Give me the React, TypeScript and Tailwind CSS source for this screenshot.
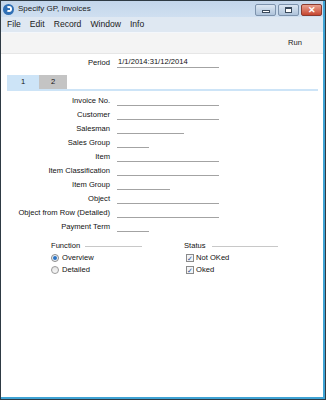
import React from "react";

const font = { fontFamily: '"Liberation Sans", Arial, sans-serif' };

function Row({ label, w }: { label: string; w: number }) {
  return (
    <div className="flex h-[14px]">
      <div className="w-[109px] shrink-0 text-right leading-[14px] text-[7.6px] text-[#111]">{label}</div>
      <div className="ml-[7px] h-[12px] border-b border-[#a3a3a3]" style={{ width: w }} />
    </div>
  );
}

export default function App() {
  return (
    <div className="w-[326px] h-[400px] bg-[#2e3a44] p-[1px]" style={font}>
      <div className="flex h-full flex-col bg-white border-r-2 border-b-2 border-[#3fa3d4]">
        {/* title bar */}
        <div className="flex h-[16px] shrink-0 items-center bg-gradient-to-b from-[#c3d6eb] to-[#cfdff0]">
          <div className="ml-[2px] flex h-[11px] w-[11px] items-center justify-center rounded-full bg-[#2f6fb5]">
            <div className="h-[6px] w-[6px] rounded-full border-2 border-white border-l-transparent" />
          </div>
          <div className="ml-[4px] text-[8px] text-[#1b1b1b]">Specify GP, Invoices</div>
          <div className="ml-auto mr-[1px] flex gap-[2px] self-start pt-[3px]">
            <div className="flex h-[12px] w-[21px] items-center justify-center rounded-[2px] border border-[#7d93ad] bg-gradient-to-b from-[#dce7f3] to-[#aec3da]">
              <div className="mt-[3px] h-[3px] w-[8px] border border-[#3a4a5c] bg-white" />
            </div>
            <div className="flex h-[12px] w-[21px] items-center justify-center rounded-[2px] border border-[#7d93ad] bg-gradient-to-b from-[#dce7f3] to-[#aec3da]">
              <div className="h-[6px] w-[7px] border border-[#3a4a5c] border-t-2 bg-white" />
            </div>
            <div className="flex h-[12px] w-[21px] items-center justify-center rounded-[2px] border border-[#8a3b30] bg-gradient-to-b from-[#e8a08f] to-[#c5442f] text-[9px] font-bold leading-none text-white">
              ✕
            </div>
          </div>
        </div>
        {/* menu bar */}
        <div className="flex h-[16px] shrink-0 items-center gap-[9px] border-b border-[#f4f7fb] bg-[#dfe8f2] pl-[6px] text-[8.6px] text-[#1b1b1b]">
          <span>File</span>
          <span>Edit</span>
          <span>Record</span>
          <span>Window</span>
          <span>Info</span>
        </div>
        {/* toolbar */}
        <div className="flex h-[21px] shrink-0 items-center justify-end border-b border-[#e6e6e6] bg-[#f4f4f4] pr-[21px] text-[7.6px] text-[#1b1b1b]">
          Run
        </div>
        {/* form */}
        <div className="flex flex-1 flex-col">
          <div className="mt-[2px] flex h-[14px]">
            <div className="w-[109px] shrink-0 text-right leading-[14px] text-[7.6px] text-[#111]">Period</div>
            <div className="ml-[7px] h-[12px] w-[102px] border-b border-[#a3a3a3] pl-[1px] leading-[12px] text-[7.6px] text-[#111]">
              1/1/2014:31/12/2014
            </div>
          </div>
          <div className="ml-[6px] mr-[5px] mt-[5px] flex border-b-2 border-[#cde4f7]">
            <div className="h-[14px] w-[32px] bg-[#cde4f7] pl-[14px] leading-[14px] text-[7.6px] text-[#111]">1</div>
            <div className="h-[14px] w-[28px] bg-[#c4c4c4] pl-[12px] leading-[14px] text-[7.6px] text-[#111]">2</div>
          </div>
          <div className="mt-[3px] flex flex-col">
            <Row label="Invoice No." w={102} />
            <Row label="Customer" w={102} />
            <Row label="Salesman" w={67} />
            <Row label="Sales Group" w={32} />
            <Row label="Item" w={102} />
            <Row label="Item Classification" w={102} />
            <Row label="Item Group" w={53} />
            <Row label="Object" w={102} />
            <Row label="Object from Row (Detailed)" w={102} />
            <Row label="Payment Term" w={32} />
          </div>
          <div className="mt-[5px] flex text-[7.6px] text-[#111]">
            <div className="ml-[50px] flex w-[133px] flex-col">
              <div className="flex h-[13px] items-center">
                <span>Function</span>
                <div className="ml-[5px] mt-[2px] h-[1px] w-[57px] bg-[#c8c8c8]" />
              </div>
              <div className="flex h-[12px] items-center">
                <div className="flex h-[8px] w-[8px] items-center justify-center rounded-full border border-[#8a8a8a] bg-[#eef3f8]">
                  <div className="h-[4px] w-[4px] rounded-full bg-[#2a73c4]" />
                </div>
                <span className="ml-[3px]">Overview</span>
              </div>
              <div className="flex h-[12px] items-center">
                <div className="h-[8px] w-[8px] rounded-full border border-[#9a9a9a] bg-gradient-to-b from-[#e4e4e4] to-[#f8f8f8]" />
                <span className="ml-[3px]">Detailed</span>
              </div>
            </div>
            <div className="flex flex-col">
              <div className="flex h-[13px] items-center">
                <span>Status</span>
                <div className="ml-[6px] mt-[2px] h-[1px] w-[66px] bg-[#c8c8c8]" />
              </div>
              <div className="ml-[2px] flex h-[12px] items-center">
                <div className="flex h-[8px] w-[8px] items-center justify-center border border-[#8a8a8a] bg-[#f2f4f7] text-[7px] leading-none text-[#2a4f8a]">
                  ✓
                </div>
                <span className="ml-[2px]">Not OKed</span>
              </div>
              <div className="ml-[2px] flex h-[12px] items-center">
                <div className="flex h-[8px] w-[8px] items-center justify-center border border-[#8a8a8a] bg-[#f2f4f7] text-[7px] leading-none text-[#2a4f8a]">
                  ✓
                </div>
                <span className="ml-[2px]">Oked</span>
              </div>
            </div>
          </div>
        </div>
      </div>
    </div>
  );
}
